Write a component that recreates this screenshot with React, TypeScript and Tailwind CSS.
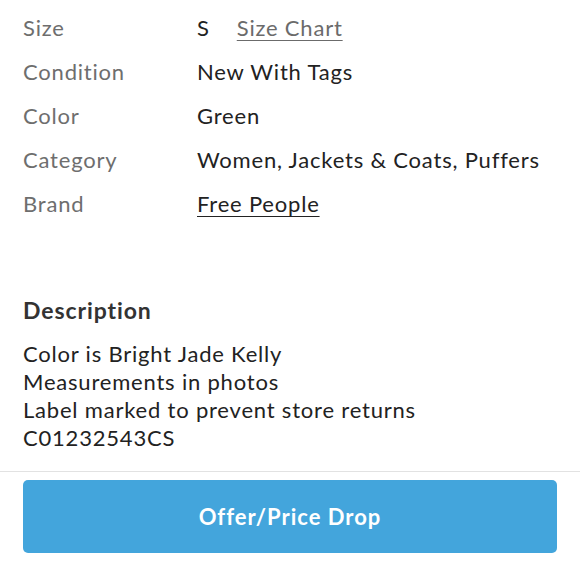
export default function App() {
  const rows: [string, React.ReactNode][] = [
    ["Size", (<span className="flex items-baseline"><span>S</span><span className="ml-[27px] text-[#6b6b6b] underline underline-offset-[4px] decoration-[1px]">Size Chart</span></span>)],
    ["Condition", "New With Tags"],
    ["Color", "Green"],
    ["Category", "Women, Jackets & Coats, Puffers"],
    ["Brand", (<span className="underline underline-offset-[4px] decoration-[1px]">Free People</span>)],
  ];
  return (
    <div className="w-[580px] h-[580px] bg-white overflow-hidden" style={{ fontFamily: "Lato, 'Noto Sans', sans-serif" }}>
      <div className="px-[23px] pt-[5px]">
        {rows.map(([k, v]) => (
          <div key={k} className="flex h-[44px] items-center text-[22px] tracking-[0.8px]">
            <div className="w-[174px] text-[#6e6e6e]">{k}</div>
            <div className="text-[#222]">{v}</div>
          </div>
        ))}
      </div>
      <div className="px-[23px] pt-[71px]">
        <div className="text-[23px] font-bold text-[#333] leading-[28px] tracking-[0.9px]">Description</div>
        <div className="mt-[16px] text-[22px] leading-[28px] text-[#222] tracking-[0.8px]">
          <div>Color is Bright Jade Kelly</div>
          <div>Measurements in photos</div>
          <div>Label marked to prevent store returns</div>
          <div>C01232543CS</div>
        </div>
      </div>
      <div className="mt-[19px] border-t border-[#e2e2e2] px-[23px] pt-[8px]">
        <button className="w-full h-[73px] rounded-[5px] bg-[#43a5dc] text-white text-[22px] font-bold tracking-[1px]">Offer/Price Drop</button>
      </div>
    </div>
  );
}
